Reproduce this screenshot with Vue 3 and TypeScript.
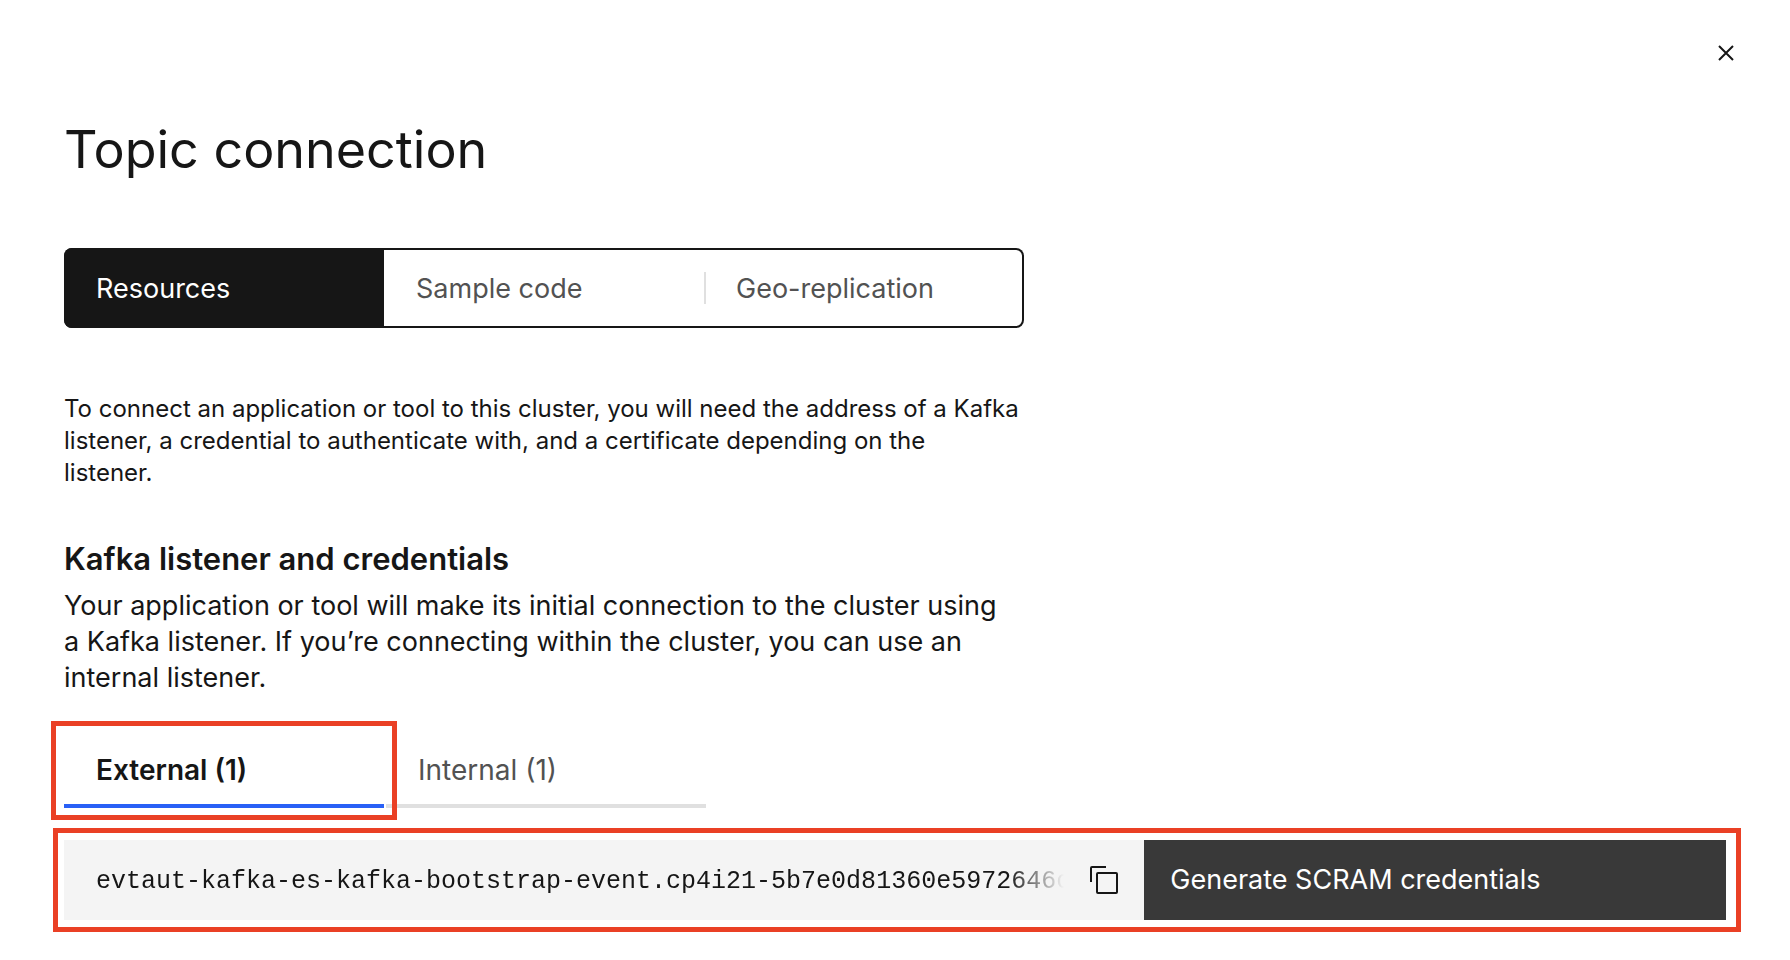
<script setup lang="ts">
import { ref } from 'vue'

const views: string[] = ['Resources', 'Sample code', 'Geo-replication']
const activeView = ref<string>(views[0])

interface Listener {
  id: string
  label: string
  address: string
}

const listeners: Listener[] = [
  { id: 'external', label: 'External (1)', address: 'evtaut-kafka-es-kafka-bootstrap-event.cp4i21-5b7e0d81360e5972646c' },
  { id: 'internal', label: 'Internal (1)', address: 'evtaut-kafka-es-kafka-bootstrap-event.svc:9093' },
]
const active = ref<Listener>(listeners[0])

function copyAddress(): void {
  navigator.clipboard?.writeText(active.value.address)
}
</script>

<template>
  <main class="panel">
    <div class="close-bar">
      <button class="icon-button" type="button" aria-label="Close">
        <svg width="40" height="40" viewBox="0 0 40 40" aria-hidden="true">
          <path d="M13 13L27 27M27 13L13 27" fill="none" stroke="#161616" stroke-width="2" />
        </svg>
      </button>
    </div>

    <h1 class="title">Topic connection</h1>

    <div class="switcher" role="tablist" aria-label="Connection views">
      <button
        v-for="view in views"
        :key="view"
        class="switch"
        :class="{ selected: view === activeView }"
        type="button"
        role="tab"
        :aria-selected="view === activeView"
        @click="activeView = view"
      >
        {{ view }}
      </button>
    </div>

    <p class="intro">
      To connect an application or tool to this cluster, you will need the address of a Kafka
      listener, a credential to authenticate with, and a certificate depending on the listener.
    </p>

    <h2 class="subtitle">Kafka listener and credentials</h2>
    <p class="description">
      Your application or tool will make its initial connection to the cluster using a Kafka
      listener. If you’re connecting within the cluster, you can use an internal listener.
    </p>

    <div class="tabs" role="tablist" aria-label="Listener type">
      <button
        v-for="item in listeners"
        :key="item.id"
        class="tab"
        :class="{ selected: item.id === active.id }"
        type="button"
        role="tab"
        :aria-selected="item.id === active.id"
        @click="active = item"
      >
        {{ item.label }}
      </button>
    </div>

    <div class="listener">
      <div class="address">
        <code class="address-text">{{ active.address }}</code>
        <button class="icon-button" type="button" aria-label="Copy address" @click="copyAddress">
          <svg width="32" height="32" viewBox="0 0 32 32" aria-hidden="true">
            <g fill="none" stroke="#161616" stroke-width="2">
              <rect x="9" y="9" width="20" height="20" rx="1" />
              <path d="M18 3H4a1 1 0 0 0-1 1V18" />
            </g>
          </svg>
        </button>
      </div>
      <button class="generate" type="button">Generate SCRAM credentials</button>
    </div>
  </main>
</template>

<style>
body {
  margin: 0;
  background: #fff;
}
</style>

<style scoped>
.panel {
  box-sizing: border-box;
  padding: 33px 64px 28px;
  color: #161616;
  font-family: Inter, "Liberation Sans", sans-serif;
  font-size: 27px;
  line-height: 36px;
}

button {
  margin: 0;
  border: 0;
  background: none;
  color: inherit;
  font: inherit;
  text-align: left;
  cursor: pointer;
}

.icon-button {
  display: flex;
  flex: none;
  padding: 0;
}

.close-bar {
  display: flex;
  justify-content: flex-end;
  margin-right: -20px;
}

.title {
  margin: 45px 0 66px;
  font-size: 52px;
  font-weight: 400;
  line-height: 64px;
}

.switcher {
  display: grid;
  grid-template-columns: repeat(3, 1fr);
  box-sizing: border-box;
  max-width: 960px;
  height: 80px;
  overflow: hidden;
  border-radius: 8px;
  box-shadow: inset 0 0 0 2px #161616;
}

.switch {
  position: relative;
  padding: 2px 32px 0;
  color: #525252;
}

.switch.selected {
  background: #161616;
  color: #fff;
}

.switch:not(.selected) + .switch::before {
  content: "";
  position: absolute;
  top: 24px;
  bottom: 24px;
  left: 0;
  width: 2px;
  background: #e0e0e0;
}

.intro {
  max-width: 956px;
  margin: 65px 0 51px;
  font-size: 24px;
  line-height: 32px;
}

.subtitle {
  margin: 0 0 10px;
  font-size: 31px;
  font-weight: 600;
  line-height: 38px;
}

.description {
  max-width: 944px;
  margin: 0 0 32px;
}

.tabs {
  display: grid;
  grid-template-columns: repeat(2, 320px);
  gap: 2px;
}

.tab {
  position: relative;
  padding: 24px 32px 16px;
  border-bottom: 4px solid #e0e0e0;
  color: #525252;
  font-size: 28px;
}

.tab.selected {
  z-index: 1;
  border-bottom-color: #2960f6;
  color: #161616;
  font-weight: 600;
}

.tab.selected::after,
.listener::after {
  content: "";
  position: absolute;
  border: 5px solid #ea4025;
  pointer-events: none;
}

.tab.selected::after {
  inset: -7px -13px -16px;
}

.listener {
  position: relative;
  display: grid;
  grid-template-columns: 65fr 35fr;
  margin-top: 32px;
}

.listener::after {
  inset: -12px -15px -12px -11px;
}

.address {
  display: flex;
  align-items: center;
  gap: 24px;
  min-width: 0;
  padding: 0 24px 0 32px;
  background: #f4f4f4;
}

.address-text {
  flex: 1;
  min-width: 0;
  padding: 24px 0 20px;
  overflow: hidden;
  font-family: "Liberation Mono", monospace;
  font-size: 25px;
  white-space: nowrap;
  mask-image: linear-gradient(to left, transparent, #000 56px);
}

.generate {
  min-height: 80px;
  padding: 0 26px;
  background: #393939;
  color: #fff;
}
</style>
